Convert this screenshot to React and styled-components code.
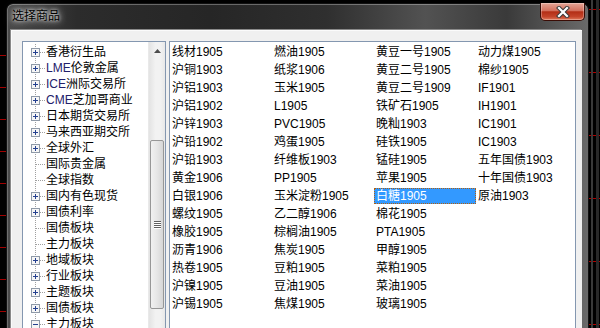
import React from "react";
import styled, { createGlobalStyle } from "styled-components";

const GlobalStyle = createGlobalStyle`
  html, body {
    margin: 0;
    padding: 0;
    background: #000;
  }
  body {
    font-family: "Liberation Sans", "Noto Sans CJK SC", sans-serif;
    font-size: 12px;
  }
`;

const treeItems = [
  { label: "香港衍生品", kind: "plus" },
  { label: "LME伦敦金属", kind: "plus" },
  { label: "ICE洲际交易所", kind: "plus" },
  { label: "CME芝加哥商业", kind: "plus" },
  { label: "日本期货交易所", kind: "plus" },
  { label: "马来西亚期交所", kind: "plus" },
  { label: "全球外汇", kind: "plus" },
  { label: "国际贵金属", kind: "leaf" },
  { label: "全球指数", kind: "leaf" },
  { label: "国内有色现货", kind: "plus" },
  { label: "国债利率", kind: "plus" },
  { label: "国债板块", kind: "leaf" },
  { label: "主力板块", kind: "leaf" },
  { label: "地域板块", kind: "plus" },
  { label: "行业板块", kind: "plus" },
  { label: "主题板块", kind: "plus" },
  { label: "国债板块", kind: "plus" },
  { label: "主力板块", kind: "minus" },
];

const goods = [
  "线材1905", "沪铜1903", "沪铝1903", "沪铝1902", "沪锌1903", "沪铅1902", "沪铅1903", "黄金1906",
  "白银1906", "螺纹1905", "橡胶1905", "沥青1906", "热卷1905", "沪镍1905", "沪锡1905",
  "燃油1905", "纸浆1906", "玉米1905", "L1905", "PVC1905", "鸡蛋1905", "纤维板1903", "PP1905",
  "玉米淀粉1905", "乙二醇1906", "棕榈油1905", "焦炭1905", "豆粕1905", "豆油1905", "焦煤1905",
  "黄豆一号1905", "黄豆二号1905", "黄豆二号1909", "铁矿石1905", "晚籼1903", "硅铁1905", "锰硅1905", "苹果1905",
  "白糖1905", "棉花1905", "PTA1905", "甲醇1905", "菜粕1905", "菜油1905", "玻璃1905",
  "动力煤1905", "棉纱1905", "IF1901", "IH1901", "IC1901", "IC1903", "五年国债1903", "十年国债1903",
  "原油1903",
];

const selected = "白糖1905";

// split a label into chinese / latin runs so the latin part can take the navy tint
function Label({ text }) {
  const runs = text.match(/[\u4e00-\u9fff]+|[^\u4e00-\u9fff]+/g) || [];
  return runs.map((r, i) =>
    /[\u4e00-\u9fff]/.test(r) ? <span key={i}>{r}</span> : <Latin key={i}>{r}</Latin>
  );
}

function Connector({ kind }) {
  return (
    <svg width="23" height="16" viewBox="0 0 23 16" style={{ flex: "none" }}>
      <line x1="12.5" y1="0" x2="12.5" y2="16" stroke="#a0a0a0" strokeDasharray="1 1" />
      <line x1={kind === "leaf" ? 13 : 17} y1="8.5" x2="22" y2="8.5" stroke="#a0a0a0" strokeDasharray="1 1" />
      {kind !== "leaf" && (
        <>
          <rect x="8.5" y="4.5" width="8" height="8" fill="#f6f6f6" stroke="#8f9aa8" />
          <line x1="10" y1="8.5" x2="15" y2="8.5" stroke="#24408f" />
          {kind === "plus" && <line x1="12.5" y1="6" x2="12.5" y2="11" stroke="#24408f" />}
        </>
      )}
    </svg>
  );
}

export default function App() {
  return (
    <Screen>
      <GlobalStyle />
      <Dialog>
        <TitleBar>
          <Title>选择商品</Title>
          <CloseButton>
            <svg width="14" height="12" viewBox="0 0 14 12">
              <path d="M3 2 L11 10 M11 2 L3 10" stroke="#3a3a3a" strokeWidth="4.2" strokeLinecap="square" />
              <path d="M3 2 L11 10 M11 2 L3 10" stroke="#fff" strokeWidth="2.2" strokeLinecap="square" />
            </svg>
          </CloseButton>
        </TitleBar>
        <Client>
          <TreeBox>
            <TreeList>
              {treeItems.map((item, i) => (
                <TreeRow key={i}>
                  <Connector kind={item.kind} />
                  <TreeText>
                    <Label text={item.label} />
                  </TreeText>
                </TreeRow>
              ))}
            </TreeList>
            <ScrollBar>
              <ArrowButton>
                <svg width="7" height="4" viewBox="0 0 7 4">
                  <path d="M0 4 L3.5 0 L7 4 Z" fill="#4d4d4d" />
                </svg>
              </ArrowButton>
              <Thumb $offset={81} $size={169}>
                <Grip />
                <Grip />
                <Grip />
                <Grip />
              </Thumb>
            </ScrollBar>
          </TreeBox>
          <ListBox>
            <Grid>
              {goods.map((g) => (
                <Item key={g} $active={g === selected}>
                  <Label text={g} />
                </Item>
              ))}
            </Grid>
          </ListBox>
        </Client>
      </Dialog>
    </Screen>
  );
}

const Screen = styled.div`
  width: 600px;
  height: 328px;
  overflow: hidden;
  background-color: #000;
  background-image:
    repeating-linear-gradient(to bottom, transparent 0 31px, #a00000 31px 32px),
    linear-gradient(#3a3a3a, #3a3a3a),
    linear-gradient(#2a2a2a, #2a2a2a),
    repeating-linear-gradient(to bottom, transparent 0 9px, #b00000 9px 10px, transparent 10px 63px);
  background-size: 6px 100%, 2px 100%, 3px 100%, 11px 100%;
  background-position: 0 24px, 591px 0, 596px 0, right 0 top 0;
  background-repeat: no-repeat;
`;

const Dialog = styled.div`
  margin: 3px 0 0 6px;
  width: 583px;
  height: 340px;
  box-sizing: border-box;
  border: 1px solid #111;
  border-bottom: none;
  border-radius: 7px 7px 0 0;
  display: flex;
  flex-direction: column;
  background: linear-gradient(90deg, #4a4a4a 0%, #2c2c2c 12%, #262626 35%, #2f2f2f 55%, #525252 72%, #3a3a3a 86%, #6a6a6a 100%);
  box-shadow: inset 0 1px 0 rgba(255, 255, 255, 0.3), inset 1px 0 0 rgba(255, 255, 255, 0.2);
`;

const TitleBar = styled.div`
  height: 26px;
  display: flex;
  justify-content: space-between;
  align-items: flex-start;
  padding-left: 5px;
  padding-right: 3px;
`;

const Title = styled.div`
  margin-top: 4px;
  line-height: 16px;
  font-size: 12px;
  color: #000;
  text-shadow: 0 0 6px rgba(255, 255, 255, 0.85), 0 0 3px rgba(255, 255, 255, 0.7), 0 0 10px rgba(220, 220, 220, 0.6);
`;

const CloseButton = styled.div`
  margin-top: -1px;
  width: 45px;
  height: 18px;
  box-sizing: border-box;
  display: flex;
  align-items: center;
  justify-content: center;
  border: 1px solid #3a0c05;
  border-top: none;
  border-radius: 0 0 5px 5px;
  background: linear-gradient(#e4a596 0%, #d2705d 45%, #b32e16 52%, #c4442a 80%, #df7a5c 100%);
  box-shadow: inset 0 0 0 1px rgba(255, 255, 255, 0.3);
`;

const Client = styled.div`
  flex: 1;
  margin: 0 6px 0 4px;
  display: flex;
  align-items: flex-start;
  gap: 3px;
  padding: 10px 6px 0 10px;
  background: #f0f0f0;
  border-top: 1px solid #fbfbfb;
  border-left: 1px solid #fbfbfb;
  box-shadow: -1px -1px 0 #8a8a8a;
`;

const TreeBox = styled.div`
  width: 144px;
  height: 300px;
  box-sizing: border-box;
  border: 1px solid #8497b0;
  background: #fff;
  display: flex;
`;

const TreeList = styled.div`
  flex: 1;
  padding-top: 2px;
  overflow: hidden;
`;

const TreeRow = styled.div`
  height: 16px;
  display: flex;
  align-items: center;
`;

const TreeText = styled.span`
  line-height: 16px;
  white-space: nowrap;
  color: #000;
`;

const ScrollBar = styled.div`
  width: 17px;
  flex: none;
  display: flex;
  flex-direction: column;
  background: linear-gradient(90deg, #e3e3e3, #f2f2f2 40%, #f2f2f2 70%, #e8e8e8);
  border-left: 1px solid #e9e9e9;
  box-sizing: border-box;
`;

const ArrowButton = styled.div`
  height: 17px;
  display: flex;
  align-items: center;
  justify-content: center;
`;

const Thumb = styled.div`
  margin: ${(p) => p.$offset}px 1px 0 1px;
  height: ${(p) => p.$size}px;
  box-sizing: border-box;
  border: 1px solid #979797;
  border-radius: 2px;
  background: linear-gradient(90deg, #f1f1f1, #e6e6e6 50%, #d6d6d6);
  display: flex;
  flex-direction: column;
  align-items: center;
  justify-content: center;
  gap: 1px;
`;

const Grip = styled.div`
  width: 7px;
  height: 1px;
  background: #606060;
  box-shadow: 0 1px 0 #fff;
`;

const ListBox = styled.div`
  flex: 1;
  height: 300px;
  box-sizing: border-box;
  border: 1px solid #8497b0;
  background: #fff;
  overflow: hidden;
`;

const Grid = styled.div`
  display: grid;
  grid-auto-flow: column;
  grid-template-rows: repeat(15, 18px);
  grid-template-columns: repeat(4, 102px);
  padding-top: 1px;
`;

const Item = styled.div`
  height: 16px;
  margin: 1px 0;
  box-sizing: border-box;
  padding-left: 1px;
  line-height: 14px;
  white-space: nowrap;
  border: 1px ${(p) => (p.$active ? "dotted #b06010" : "solid transparent")};
  background: ${(p) => (p.$active ? "#3399ff" : "transparent")};
  color: ${(p) => (p.$active ? "#fff" : "#000")};

  span {
    color: ${(p) => (p.$active ? "#fff" : "inherit")};
  }
`;

const Latin = styled.span`
  color: #22206a;
`;
